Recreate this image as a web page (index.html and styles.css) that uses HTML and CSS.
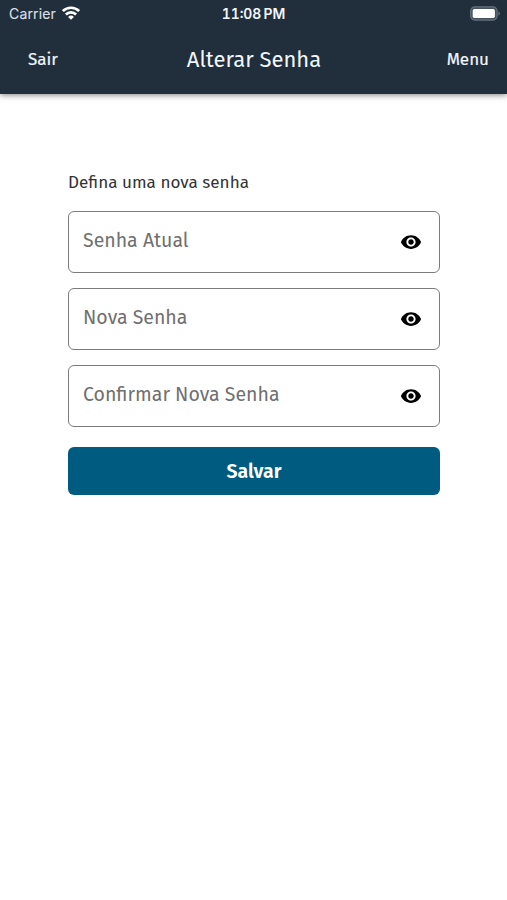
FILE: index.html
```html
<!DOCTYPE html>
<html lang="pt-BR">
<head>
<meta charset="utf-8">
<meta name="viewport" content="width=device-width, initial-scale=1">
<title>Alterar Senha</title>
<link rel="stylesheet" href="styles.css">
</head>
<body>
<svg width="0" height="0" class="sprite" aria-hidden="true">
  <symbol id="eye" viewBox="0 0 24 24"><path d="M12 4.500C7 4.500 2.730 7.610 1 12c1.730 4.390 6 7.500 11 7.500s9.270-3.110 11-7.500c-1.730-4.390-6-7.500-11-7.500zM12 17c-2.760 0-5-2.240-5-5s2.240-5 5-5 5 2.240 5 5-2.240 5-5 5zm0-8c-1.660 0-3 1.340-3 3s1.340 3 3 3 3-1.340 3-3-1.340-3-3-3z"/></symbol>
</svg>
<header class="header">
  <div class="status">
    <div class="carrier"><span>Carrier</span>
      <svg class="wifi" viewBox="0 0 18 14" fill="none" stroke="#fff" stroke-width="2.700"><path d="M.9 5.100a11.500 11.500 0 0 1 16.200 0M3.900 8.500a7.200 7.200 0 0 1 10.200 0"/><path d="M9 13.800L6.100 10.900a4.100 4.100 0 0 1 5.800 0z" fill="#fff" stroke="none"/></svg>
    </div>
    <time class="time">11:08 PM</time>
    <svg class="battery" viewBox="0 0 31 15"><rect x="1.700" y=".9" width="26.400" height="13.200" rx="4" fill="#46525e" stroke="#65717c" stroke-width="1.200"/><rect x="3.700" y="2.900" width="22.200" height="9.200" rx="1.800" fill="#fff"/><path d="M29.400 5.200q1.500 1 1.500 2.300t-1.500 2.300z" fill="#65717c"/></svg>
  </div>
  <nav class="nav">
    <a class="exit">Sair</a>
    <h1 class="title">Alterar Senha</h1>
    <a class="menu">Menu</a>
  </nav>
</header>
<main class="form">
  <p class="intro">Defina uma nova senha</p>
  <div class="field"><span class="current">Senha Atual</span><svg class="eye"><use href="#eye"/></svg></div>
  <div class="field"><span class="new">Nova Senha</span><svg class="eye"><use href="#eye"/></svg></div>
  <div class="field"><span class="confirm">Confirmar Nova Senha</span><svg class="eye"><use href="#eye"/></svg></div>
  <button class="save" type="button">Salvar</button>
</main>
</body>
</html>
```
FILE: styles.css
```css
* { box-sizing: border-box; }
body {
  margin: 0;
  min-height: 900px;
  background: #fff;
  font-family: "Fira Sans", "Noto Sans", sans-serif;
}
.sprite { position: absolute; }
.header {
  height: 94px;
  background: #212e3b;
  color: #f1f7fb;
  box-shadow: 0 1px 6px rgba(0, 0, 0, .5);
}
.status {
  display: grid;
  grid-template-columns: 1fr auto 1fr;
  align-items: center;
  height: 27px;
  padding: 0 7px 0 9px;
  font-family: Inter, sans-serif;
  font-size: 14px;
}
.carrier { display: flex; align-items: center; gap: 6px; color: #d8dfe5; letter-spacing: .15px; }
.carrier span { -webkit-text-stroke: .15px currentColor; }
.wifi { width: 18px; height: 14px; margin-top: -1px; }
.time {
  margin-left: -2px;
  font-weight: 600;
  font-size: 13.900px;
  font-variant-numeric: tabular-nums;
  word-spacing: -1.500px;
}
.battery { width: 31px; height: 15px; margin-top: -1px; justify-self: end; }
.nav {
  display: grid;
  grid-template-columns: 1fr auto 1fr;
  align-items: center;
  height: 66px;
  padding: 0 18px 0 28px;
  font-size: 17px;
  -webkit-text-stroke: .2px currentColor;
}
.exit, .menu { padding-bottom: 1px; }
.title {
  margin: 0 0 0 -9px;
  padding-bottom: 1px;
  font-size: 22px;
  font-weight: 400;
  -webkit-text-stroke: 0;
}
.menu { justify-self: end; }
.form { display: flex; flex-direction: column; margin: 77px 67px 0 68px; }
.intro { margin: 0 0 16px; font-size: 17.100px; line-height: 24px; color: #333; }
.field {
  display: flex;
  align-items: center;
  justify-content: space-between;
  height: 62px;
  margin-bottom: 15px;
  padding: 0 17px 0 14px;
  border: 1px solid #7c7c7c;
  border-radius: 6px;
  color: #707070;
  font-size: 19.500px;
}
.field span { padding-bottom: 3px; }
.eye { width: 22px; height: 22px; margin-right: .5px; fill: #000; }
.save {
  height: 48px;
  margin-top: 5px;
  padding-top: 2px;
  border: 0;
  border-radius: 6px;
  background: #005b80;
  color: #fff;
  font: 600 19.500px "Fira Sans", "Noto Sans", sans-serif;
}
```
